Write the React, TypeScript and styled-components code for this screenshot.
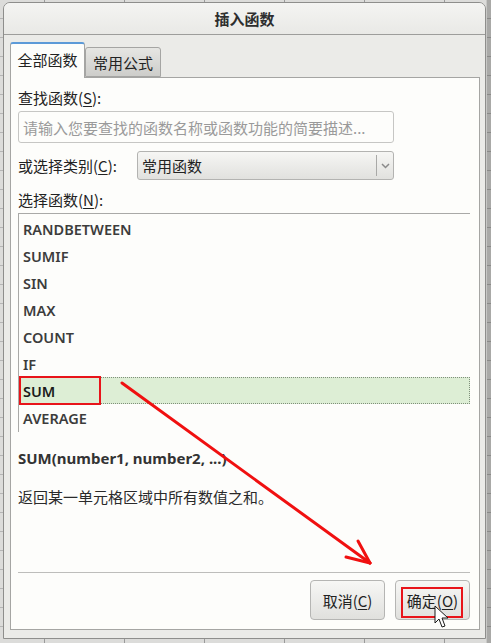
import React from "react";
import styled, { createGlobalStyle } from "styled-components";

const GlobalStyle = createGlobalStyle`
  html, body { margin: 0; padding: 0; }
  body {
    background: #d8d8d6;
    font-family: "Noto Sans CJK SC", "Noto Sans", sans-serif;
  }
`;

const Screen = styled.div`
  position: relative;
  width: 491px;
  height: 643px;
  display: grid;
  grid-template-columns: 3px 483px 5px;
  grid-template-rows: 2px 637px 4px;
  background-color: #dcdcda;
  background-image:
    repeating-linear-gradient(to right, transparent 0 44px, #9a9a9a 44px 45px, transparent 45px 80px),
    repeating-linear-gradient(to bottom, transparent 0 18px, #b5b5b5 18px 19px);
  overflow: hidden;
`;

const RightStrip = styled.div`
  grid-column: 3;
  grid-row: 1 / 4;
  background-color: #a9a9a7;
  background-image: repeating-linear-gradient(to bottom, transparent 0 18px, #8a8a88 18px 19px);
  border-left: 1px solid #c8c8c6;
`;

const Dialog = styled.div`
  grid-column: 2;
  grid-row: 2;
  display: flex;
  flex-direction: column;
  background: #ebebe8;
  border: 1px solid #8e8e8c;
  border-radius: 7px 7px 0 0;
  box-sizing: border-box;
  overflow: hidden;
`;

const TitleBar = styled.div`
  height: 31px;
  flex: none;
  display: flex;
  align-items: center;
  justify-content: center;
  background: linear-gradient(#f4f4f2, #e9e9e6);
  border-bottom: 1px solid #9d9d9b;
  font-size: 15px;
  font-weight: 700;
  color: #2e2e2e;
`;

const Body = styled.div`
  flex: 1;
  display: flex;
  flex-direction: column;
  padding: 7px 5px 8px 6px;
  min-height: 0;
`;

const TabRow = styled.div`
  display: flex;
  align-items: flex-end;
  height: 36px;
  margin-bottom: -1px;
  position: relative;
  z-index: 1;
`;

const Tab = styled.div<{ $active?: boolean }>`
  box-sizing: border-box;
  display: flex;
  align-items: center;
  justify-content: center;
  font-size: 15px;
  color: #222;
  border: 1px solid #a5a5a3;
  border-bottom: none;
  border-radius: 3px 3px 0 0;
  ${(p) =>
    p.$active
      ? `
    width: 75px;
    height: 36px;
    background: #fdfdfb;
    border-top: 2px solid #5c9ad8;
    padding-bottom: 3px;
  `
      : `
    width: 76px;
    height: 30px;
    background: linear-gradient(#e6e6e3, #cdcdca);
    border-bottom: 1px solid #a5a5a3;
    margin-bottom: 1px;
    padding-top: 1px;
  `}
`;

const Panel = styled.div`
  flex: 1;
  display: flex;
  flex-direction: column;
  background: #fdfdfb;
  border: 1px solid #a5a5a3;
  padding: 10px 8px 9px 7px;
  min-height: 0;
`;

const Label = styled.div<{ $width?: number }>`
  font-size: 15px;
  line-height: 20px;
  height: 20px;
  color: #222;
  flex: none;
  ${(p) => (p.$width ? `width: ${p.$width}px;` : "")}
  u { text-decoration-thickness: 1px; text-underline-offset: 2px; }
`;

const SearchInput = styled.div`
  margin-top: 3px;
  width: 376px;
  height: 32px;
  box-sizing: border-box;
  border: 1px solid #c6c6c4;
  border-radius: 3px;
  display: flex;
  align-items: center;
  padding-left: 4px;
  font-size: 15px;
  color: #9a9a9a;
  white-space: nowrap;
  overflow: hidden;
`;

const CategoryRow = styled.div`
  margin-top: 8px;
  display: flex;
  align-items: center;
  height: 29px;
`;

const Select = styled.div`
  width: 257px;
  height: 29px;
  box-sizing: border-box;
  border: 1px solid #b3b3b1;
  border-radius: 3px;
  background: linear-gradient(#f6f6f4, #e1e1de);
  display: flex;
  align-items: center;
  font-size: 15px;
  color: #222;
`;

const SelectText = styled.span`
  flex: 1;
  padding-left: 4px;
`;

const SelectButton = styled.span`
  width: 16px;
  height: 21px;
  border-left: 1px solid #a9a9a7;
  display: flex;
  align-items: center;
  justify-content: center;
`;

const SectionLabel = styled(Label)`
  margin-top: 10px;
`;

const FunctionList = styled.div`
  margin-top: 3px;
  width: 452px;
  height: 219px;
  box-sizing: border-box;
  border-top: 1px solid #a9a9a7;
  border-left: 1px solid #a9a9a7;
  padding-top: 1px;
  flex: none;
`;

const Row = styled.div<{ $selected?: boolean }>`
  position: relative;
  height: 27px;
  box-sizing: border-box;
  display: flex;
  align-items: center;
  padding-left: 4px;
  font-family: "Noto Sans", "Noto Sans CJK SC", sans-serif;
  font-size: 14.5px;
  font-weight: 600;
  color: ${(p) => (p.$selected ? "#1a1a1a" : "#3c3c3c")};
  ${(p) =>
    p.$selected
      ? `
    background: #ddeed5;
    border: 1px dotted #7f8f7b;
    padding-left: 3px;
  `
      : ""}
`;

const RedBox = styled.div<{ $l: number; $t: number; $w: number; $h: number }>`
  position: absolute;
  left: ${(p) => p.$l}px;
  top: ${(p) => p.$t}px;
  width: ${(p) => p.$w}px;
  height: ${(p) => p.$h}px;
  box-sizing: border-box;
  border: 2px solid #e8141a;
  pointer-events: none;
`;

const Signature = styled.div`
  margin-top: 16px;
  font-family: "Noto Sans", "Noto Sans CJK SC", sans-serif;
  font-size: 15px;
  font-weight: 700;
  line-height: 20px;
  color: #333;
`;

const Description = styled.div`
  margin-top: 19px;
  font-size: 15px;
  line-height: 20px;
  color: #2a2a2a;
`;

const Spacer = styled.div`
  flex: 1;
`;

const Separator = styled.div`
  height: 1px;
  width: 452px;
  background: #bdbdbb;
  flex: none;
`;

const ButtonRow = styled.div`
  margin-top: 7px;
  display: flex;
  justify-content: flex-end;
  gap: 10px;
  padding-right: 1px;
`;

const Button = styled.div`
  position: relative;
  width: 75px;
  height: 40px;
  box-sizing: border-box;
  border: 1px solid #b5b5b3;
  border-radius: 4px;
  background: linear-gradient(#f7f7f5, #e0e0dd);
  display: flex;
  align-items: center;
  justify-content: center;
  font-size: 15px;
  color: #222;
  u { text-decoration-thickness: 1px; text-underline-offset: 2px; }
`;

const Overlay = styled.svg`
  position: absolute;
  left: 0;
  top: 0;
  width: 491px;
  height: 643px;
  pointer-events: none;
`;

const functions = ["RANDBETWEEN", "SUMIF", "SIN", "MAX", "COUNT", "IF", "SUM", "AVERAGE"];

export default function App() {
  return (
    <>
      <GlobalStyle />
      <Screen>
        <Dialog>
          <TitleBar>插入函数</TitleBar>
          <Body>
            <TabRow>
              <Tab $active>全部函数</Tab>
              <Tab>常用公式</Tab>
            </TabRow>
            <Panel>
              <Label>
                查找函数(<u>S</u>):
              </Label>
              <SearchInput>请输入您要查找的函数名称或函数功能的简要描述...</SearchInput>
              <CategoryRow>
                <Label $width={119}>
                  或选择类别(<u>C</u>):
                </Label>
                <Select>
                  <SelectText>常用函数</SelectText>
                  <SelectButton>
                    <svg width="9" height="6" viewBox="0 0 9 6">
                      <path d="M1 1 L4.5 4.5 L8 1" fill="none" stroke="#8a8a8a" strokeWidth="1.5" />
                    </svg>
                  </SelectButton>
                </Select>
              </CategoryRow>
              <SectionLabel>
                选择函数(<u>N</u>):
              </SectionLabel>
              <FunctionList>
                {functions.map((f) => (
                  <Row key={f} $selected={f === "SUM"}>
                    {f}
                    {f === "SUM" && <RedBox $l={-1} $t={-2} $w={82} $h={29} />}
                  </Row>
                ))}
              </FunctionList>
              <Signature>SUM(number1, number2, ...)</Signature>
              <Description>返回某一单元格区域中所有数值之和。</Description>
              <Spacer />
              <Separator />
              <ButtonRow>
                <Button>
                  取消(<u>C</u>)
                </Button>
                <Button>
                  确定(<u>O</u>)
                  <RedBox $l={5} $t={6} $w={62} $h={31} />
                </Button>
              </ButtonRow>
            </Panel>
          </Body>
        </Dialog>
        <RightStrip />
        <Overlay viewBox="0 0 491 643">
          <g stroke="#f01010" strokeWidth="3" strokeLinecap="round" fill="none">
            <line x1="122" y1="383" x2="370" y2="563" />
            <line x1="370" y1="563" x2="346" y2="557" />
            <line x1="370" y1="563" x2="358" y2="541" />
          </g>
          <path
            d="M435 606 L435 623 L439 619 L442 627 L445 626 L442 618 L448 618 Z"
            fill="#ffffff"
            stroke="#1a1a1a"
            strokeWidth="1"
            strokeLinejoin="round"
          />
        </Overlay>
      </Screen>
    </>
  );
}
